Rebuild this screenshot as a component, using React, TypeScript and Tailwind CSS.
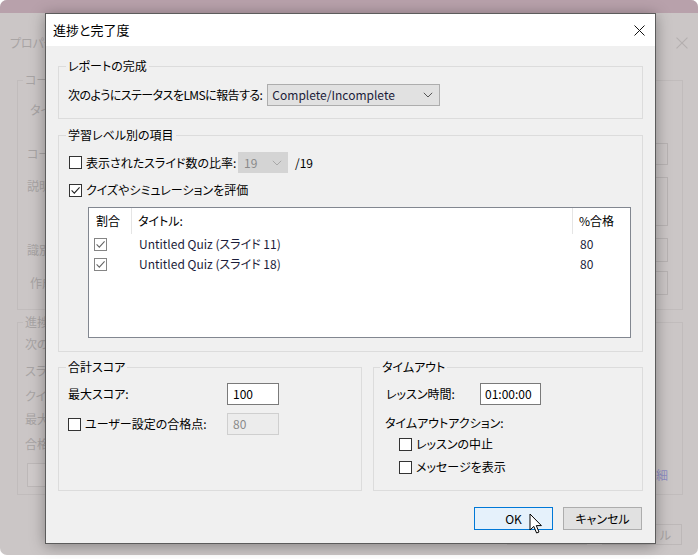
import React from "react";

const font = "font-['Noto_Sans_CJK_JP','Noto_Sans',sans-serif] [font-feature-settings:'palt']";

// small helpers
function Check({ checked, muted }: { checked?: boolean; muted?: boolean }) {
  return (
    <span
      className={`flex h-[13px] w-[13px] shrink-0 items-center justify-center border bg-white ${
        muted ? "border-[#858585]" : "border-[#333333]"
      }`}
    >
      {checked && (
        <svg width="11" height="11" viewBox="0 0 11 11">
          <path d="M1.6 5.4 L4.3 8.1 L9.6 2.4" fill="none" stroke={muted ? "#666666" : "#222222"} strokeWidth="1.1" />
        </svg>
      )}
    </span>
  );
}

function Chevron({ color }: { color: string }) {
  return (
    <svg width="10" height="6" viewBox="0 0 10 6">
      <path d="M0.8 0.8 L5 5 L9.2 0.8" fill="none" stroke={color} strokeWidth="1" />
    </svg>
  );
}

function CloseX({ color, size = 11 }: { color: string; size?: number }) {
  return (
    <svg width={size} height={size} viewBox="0 0 11 11">
      <path d="M0.5 0.5 L10.5 10.5 M10.5 0.5 L0.5 10.5" stroke={color} strokeWidth="1" />
    </svg>
  );
}

function Group({
  title,
  className = "",
  legendClass = "ml-[7px]",
  children,
}: {
  title: string;
  className?: string;
  legendClass?: string;
  children: React.ReactNode;
}) {
  return (
    <fieldset className={`border border-[#dcdcdc] ${className}`}>
      <legend className={`px-[2px] text-[12px] leading-[16px] ${legendClass}`}>{title}</legend>
      {children}
    </fieldset>
  );
}

function BackgroundWindow() {
  return (
    <div className="flex h-[555px] w-[698px] flex-col overflow-hidden whitespace-nowrap rounded-[7px] bg-[#cbc6c6] text-[12px] text-[#a8a4a4]">
      <div className="h-[13px] shrink-0 bg-[#b8a1ab]" />
      <div className="mt-[15px] flex h-[30px] items-center justify-between pl-[10px] pr-[10px]">
        <span>プロパティ</span>
        <CloseX color="#b4afaf" size={12} />
      </div>
      <div className="mt-[14px] flex flex-col pl-[17px] pr-[15px]">
        <fieldset className="h-[238px] border border-[#c1bcbc]">
          <legend className="ml-[5px] px-[2px] leading-[16px]">コース</legend>
          <div className="flex flex-col pr-[14px]">
            <div className="mt-[10px] flex h-[24px] items-center pl-[12px]">タイトル:</div>
            <div className="mt-[21px] flex h-[22px] items-center justify-between pl-[9px]">
              <span>コース ID:</span>
              <span className="h-full w-[200px] border border-[#b8b3b3]" />
            </div>
            <div className="mt-[12px] flex h-[49px] items-start justify-between pl-[9px]">
              <span>説明:</span>
              <span className="h-full w-[200px] border border-[#b8b3b3]" />
            </div>
            <div className="mt-[12px] flex h-[24px] items-center justify-between pl-[9px]">
              <span>識別子:</span>
              <span className="h-full w-[200px] border border-[#b8b3b3]" />
            </div>
            <div className="mt-[9px] flex h-[24px] items-center justify-between pl-[12px]">
              <span>作成者:</span>
              <span className="h-full w-[200px] border border-[#b8b3b3]" />
            </div>
          </div>
        </fieldset>
        <fieldset className="mt-[4px] h-[181px] border border-[#c1bcbc]">
          <legend className="ml-[5px] px-[2px] leading-[16px]">進捗と完了度</legend>
          <div className="flex flex-col pl-[7px] pr-[14px]">
            <div className="mt-[4px] flex h-[20px] items-center">次のようにステータスを報告</div>
            <div className="mt-[7px] flex h-[20px] items-center">スライド</div>
            <div className="mt-[5px] flex h-[20px] items-center">クイズ</div>
            <div className="mt-[3px] flex h-[20px] items-center">最大スコア</div>
            <div className="mt-[5px] flex h-[20px] items-center">合格点</div>
            <div className="mt-[9px] flex h-[24px] items-center justify-between pl-[2px]">
              <span className="h-full w-[100px] border border-[#bdb8b8] bg-[#cfcaca]" />
              <span className="text-[#8f8fc4]">詳細</span>
            </div>
          </div>
        </fieldset>
        <div className="mt-[29px] flex justify-end gap-[15px] pr-[1px]">
          <span className="flex h-[21px] w-[80px] items-center justify-center border border-[#bdb8b8]">OK</span>
          <span className="flex h-[21px] w-[80px] items-center justify-end border border-[#bdb8b8] pr-[10px]">ル</span>
        </div>
      </div>
    </div>
  );
}

function QuizRow({ title }: { title: string }) {
  return (
    <div className="grid h-[20px] grid-cols-[43px_1fr_57px] items-center text-[#1c1c3a]">
      <div className="pl-[5px]">
        <Check checked muted />
      </div>
      <div className="pl-[7px]">{title}</div>
      <div className="pl-[7px]">80</div>
    </div>
  );
}

function Dialog() {
  return (
    <div className="absolute left-[45px] top-[13px] flex w-[611px] flex-col whitespace-nowrap border border-[#5c5c5c] bg-[#f0f0f0] text-[12px] text-black shadow-[0_2px_14px_rgba(0,0,0,0.35)]">
      <div className="flex h-[32px] items-center justify-between bg-white pl-[7px] pr-[10px]">
        <span className="text-[13px]">進捗と完了度</span>
        <CloseX color="#111111" />
      </div>

      <div className="flex flex-col px-[12px] pb-[13px] pt-[12px]">
        <Group title="レポートの完成">
          <div className="flex items-center pb-[12px] pl-[9px] pt-[10px]">
            <span className="tracking-[-0.55px]">次のようにステータスをLMSに報告する:</span>
            <div className="ml-[5px] flex h-[22px] w-[173px] items-center justify-between border border-[#adadad] bg-[#e1e1e1] pl-[4px] pr-[6px] text-[#1c1c3a]">
              <span>Complete/Incomplete</span>
              <Chevron color="#555555" />
            </div>
          </div>
        </Group>

        <Group title="学習レベル別の項目" className="mt-[8px]">
          <div className="flex flex-col pb-[13px] pl-[10px] pr-[11px] pt-[9px]">
            <div className="flex h-[21px] items-center">
              <Check />
              <span className="ml-[4px] w-[152px]">表示されたスライド数の比率:</span>
              <div className="flex h-[21px] w-[50px] items-center justify-between bg-[#d4d4d4] pl-[6px] pr-[6px] text-[#8a8a8a]">
                <span>19</span>
                <Chevron color="#a8a8a8" />
              </div>
              <span className="ml-[7px]">/19</span>
            </div>
            <div className="mt-[8px] flex h-[18px] items-center">
              <Check checked />
              <span className="ml-[4px]">クイズやシミュレーションを評価</span>
            </div>
            <div className="ml-[19px] mt-[8px] h-[131px] border border-[#828790] bg-white">
              <div className="grid h-[26px] grid-cols-[43px_1fr_57px]">
                <div className="flex items-center border-r border-[#e5e5e5] pl-[7px]">割合</div>
                <div className="flex items-center border-r border-[#e5e5e5] pl-[6px]">タイトル:</div>
                <div className="flex items-center pl-[6px]">%合格</div>
              </div>
              <QuizRow title="Untitled Quiz (スライド 11)" />
              <QuizRow title="Untitled Quiz (スライド 18)" />
            </div>
          </div>
        </Group>

        <div className="mt-[7px] flex gap-[11px]">
          <Group title="合計スコア" className="h-[132px] w-[304px]">
            <div className="flex flex-col pl-[9px] pt-[8px]">
              <div className="flex h-[22px] items-center">
                <span className="w-[159px]">最大スコア:</span>
                <div className="flex h-[22px] w-[52px] items-center border border-[#7a7a7a] bg-white pl-[5px]">100</div>
              </div>
              <div className="mt-[8px] flex h-[22px] items-center">
                <Check />
                <span className="ml-[4px] w-[142px]">ユーザー設定の合格点:</span>
                <div className="flex h-[22px] w-[52px] items-center border border-[#cfcfcf] bg-[#ececec] pl-[5px] text-[#8a8a8a]">
                  80
                </div>
              </div>
            </div>
          </Group>

          <Group title="タイムアウト" className="h-[132px] flex-1" legendClass="ml-[6px]">
            <div className="flex flex-col pl-[11px] pt-[8px]">
              <div className="flex h-[22px] items-center">
                <span className="w-[95px] pl-[1px]">レッスン時間:</span>
                <div className="flex h-[22px] w-[61px] items-center border border-[#7a7a7a] bg-white pl-[4px]">01:00:00</div>
              </div>
              <div className="mt-[10px] flex h-[16px] items-center">タイムアウトアクション:</div>
              <div className="ml-[14px] mt-[3px] flex h-[20px] items-center">
                <Check />
                <span className="ml-[4px]">レッスンの中止</span>
              </div>
              <div className="ml-[14px] mt-[3px] flex h-[20px] items-center">
                <Check />
                <span className="ml-[4px]">メッセージを表示</span>
              </div>
            </div>
          </Group>
        </div>

        <div className="mt-[16px] flex justify-end gap-[10px] pr-[1px]">
          <button className="flex h-[23px] w-[79px] items-center justify-center border border-[#0078d7] bg-[#e5f1fb]">
            OK
          </button>
          <button className="flex h-[23px] w-[79px] items-center justify-center border border-[#adadad] bg-[#e1e1e1]">
            キャンセル
          </button>
        </div>
      </div>
    </div>
  );
}

function Cursor() {
  return (
    <svg className="absolute left-[529px] top-[513px]" width="14" height="22" viewBox="0 0 14 22">
      <path
        d="M1 1 L1 17 L4.8 13.4 L7.6 20 L10 19 L7.3 12.6 L12.4 12.6 Z"
        fill="#ffffff"
        stroke="#000000"
        strokeWidth="1"
        strokeLinejoin="round"
      />
    </svg>
  );
}

export default function App() {
  return (
    <div className={`relative h-[559px] w-[700px] overflow-hidden bg-white ${font}`}>
      <BackgroundWindow />
      <Dialog />
      <Cursor />
    </div>
  );
}
